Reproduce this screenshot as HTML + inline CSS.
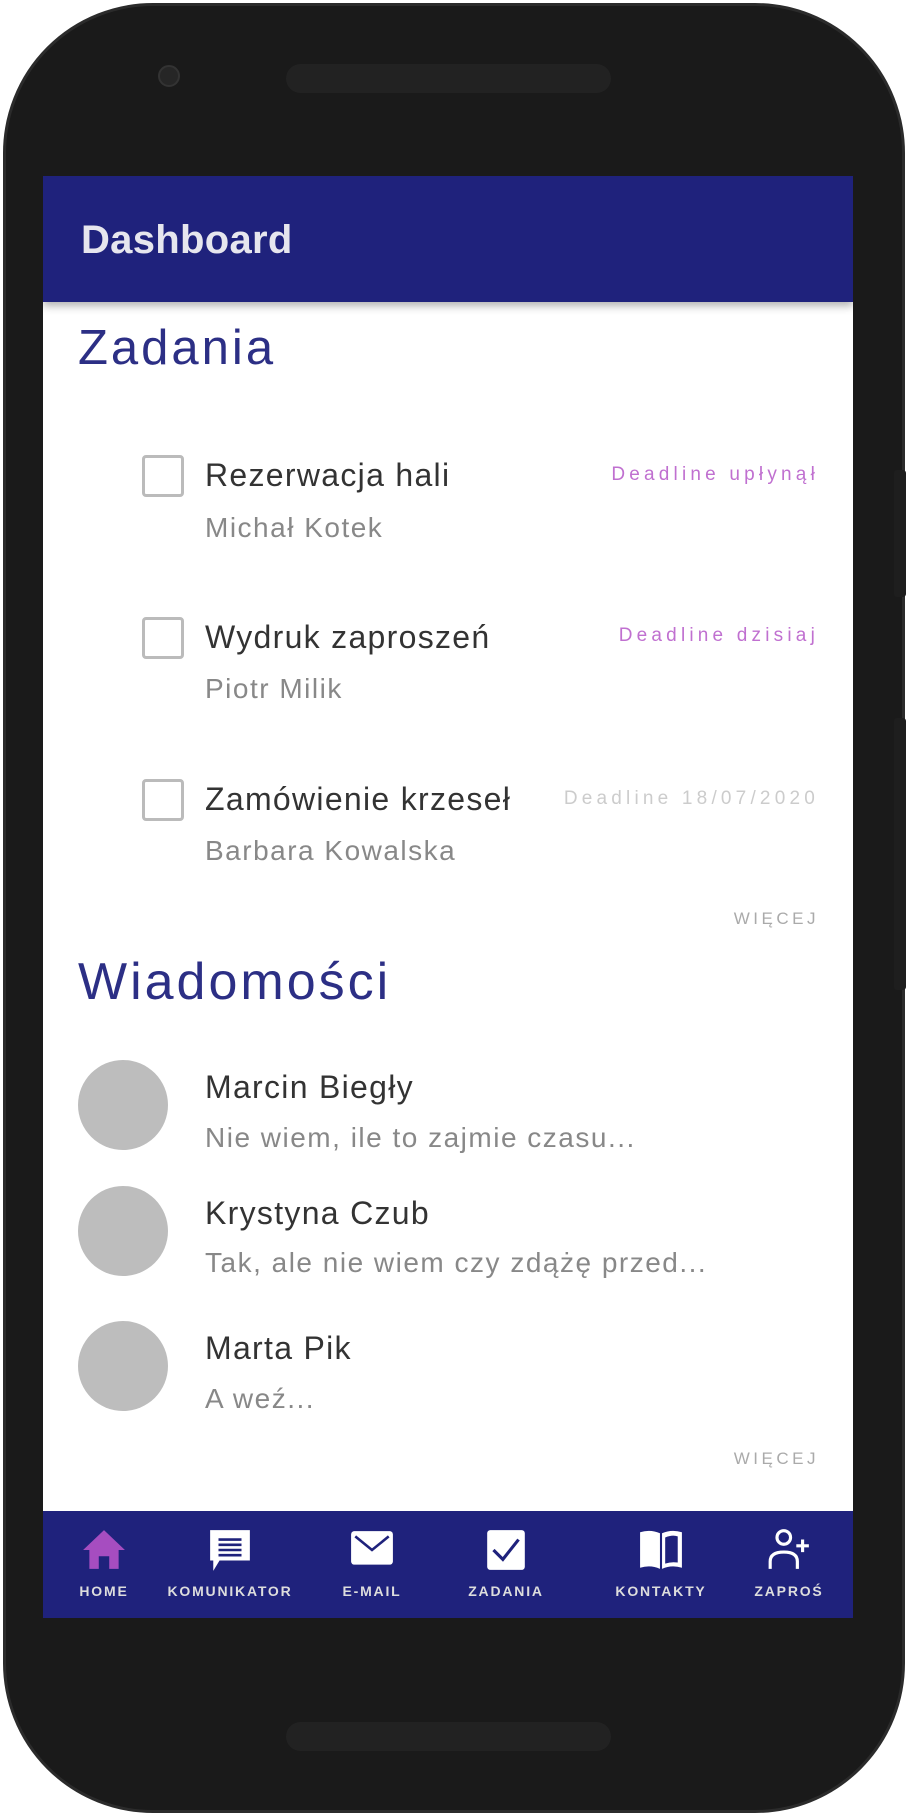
<!DOCTYPE html>
<html><head><meta charset="utf-8"><style>
*{margin:0;padding:0;box-sizing:border-box}
html,body{width:908px;height:1820px;background:#fff;overflow:hidden;font-family:"Liberation Sans",sans-serif}
.phone{position:absolute;left:3px;top:3px;width:902px;height:1810px;background:#1a1a1a;border-radius:150px;border:3px solid #2b2b2b}
.btn{position:absolute;left:894px;width:12px;background:#1e1e1e;border-radius:3px}
.spk{position:absolute;left:286px;width:325px;height:29px;border-radius:15px;background:#222}
.cam{position:absolute;left:158px;top:65px;width:22px;height:22px;border-radius:50%;background:#262626;border:2px solid #333}
.screen{position:absolute;left:43px;top:176px;width:810px;height:1442px;background:#fff;overflow:hidden}
.hdr{position:absolute;left:0;top:0;width:810px;height:126px;background:#1f227c;box-shadow:0 4px 8px rgba(0,0,0,.3)}
.hdr span{position:absolute;left:38px;top:42px;color:#e6e6ee;font-size:40px;font-weight:bold;letter-spacing:0.3px}
.h2{position:absolute;left:35px;color:#2c2f85;font-size:49px;letter-spacing:3px}
.cb{position:absolute;left:99px;width:42px;height:42px;border:3px solid #bbb;border-radius:4px}
.t{position:absolute;left:162px;color:#333;font-size:32px;letter-spacing:1.3px}
.s{position:absolute;left:162px;color:#888;font-size:28px;letter-spacing:1.5px}
.dl{position:absolute;right:34px;font-size:19px;letter-spacing:4.2px}
.more{position:absolute;right:34px;color:#aaa;font-size:17px;letter-spacing:3.5px}
.av{position:absolute;left:35px;width:90px;height:90px;border-radius:50%;background:#bdbdbd}
.nav{position:absolute;left:0;top:1335px;width:810px;height:107px;background:#1f227c}
.it{position:absolute;top:0;width:150px;margin-left:-75px;text-align:center;color:#fff;font-size:14px;font-weight:bold}
.it svg{position:absolute;left:52px;top:16px}
.it span{position:absolute;left:0;right:0;top:72px;color:#ddd;letter-spacing:1.8px}
</style></head><body>
<div class="phone"></div>
<div class="btn" style="top:470px;height:127px"></div>
<div class="btn" style="top:718px;height:272px"></div>
<div class="cam"></div>
<div class="spk" style="top:64px"></div>
<div class="spk" style="top:1722px"></div>
<div class="screen">
<div class="hdr"><span>Dashboard</span></div>
<div class="h2" style="top:144px">Zadania</div>
<div class="cb" style="top:279px"></div><div class="t" style="top:281px">Rezerwacja hali</div><div class="s" style="top:336px">Michał Kotek</div><div class="dl" style="top:288px;color:#c070d0">Deadline upłynął</div>
<div class="cb" style="top:441px"></div><div class="t" style="top:443px">Wydruk zaproszeń</div><div class="s" style="top:497px">Piotr Milik</div><div class="dl" style="top:449px;color:#c070d0">Deadline dzisiaj</div>
<div class="cb" style="top:603px"></div><div class="t" style="top:605px">Zamówienie krzeseł</div><div class="s" style="top:659px">Barbara Kowalska</div><div class="dl" style="top:612px;color:#ccc">Deadline 18/07/2020</div>
<div class="more" style="top:733px">WIĘCEJ</div>
<div class="h2" style="top:776px;font-size:52px">Wiadomości</div>
<div class="av" style="top:884px"></div><div class="t" style="top:893px">Marcin Biegły</div><div class="s" style="top:946px">Nie wiem, ile to zajmie czasu...</div>
<div class="av" style="top:1010px"></div><div class="t" style="top:1019px">Krystyna Czub</div><div class="s" style="top:1071px">Tak, ale nie wiem czy zdążę przed...</div>
<div class="av" style="top:1145px"></div><div class="t" style="top:1154px">Marta Pik</div><div class="s" style="top:1207px">A weź...</div>
<div class="more" style="top:1273px">WIĘCEJ</div>
<div class="nav">
<div class="it" style="left:61px"><svg width="46" height="46" viewBox="0 0 44 44"><path d="M22 3 L42 22 L36 22 L36 40 L27 40 L27 28 L17 28 L17 40 L8 40 L8 22 L2 22 Z" fill="#a64dc0"/></svg><span>HOME</span></div>
<div class="it" style="left:187px"><svg width="46" height="46" viewBox="0 0 44 44"><path d="M3 3 H41 V32 H12 L6 42 V32 H3 Z" fill="#fff"/><path d="M11 12H33M11 17H33M11 22H33M11 27H33" stroke="#1f227c" stroke-width="2.5"/></svg><span>KOMUNIKATOR</span></div>
<div class="it" style="left:329px"><svg width="46" height="46" viewBox="0 0 44 44"><rect x="2" y="4" width="40" height="32" rx="3" fill="#fff"/><path d="M6 9 L22 22 L38 9" fill="none" stroke="#1f227c" stroke-width="2.5"/></svg><span>E-MAIL</span></div>
<div class="it" style="left:463px"><svg width="46" height="46" viewBox="0 0 44 44"><rect x="4" y="3" width="36" height="38" rx="3" fill="#fff"/><path d="M10 22 L19 31 L34 12" fill="none" stroke="#1f227c" stroke-width="3"/></svg><span>ZADANIA</span></div>
<div class="it" style="left:618px"><svg width="46" height="46" viewBox="0 0 44 44"><path d="M2 5 Q12 2 21 6 V40 Q12 36 2 39 Z M23 6 Q32 2 42 5 V39 Q32 36 23 40 Z" fill="#fff"/><path d="M26 10 Q33 7 38 9 V34 Q32 33 26 35 Z" fill="#1f227c"/></svg><span>KONTAKTY</span></div>
<div class="it" style="left:746px"><svg width="46" height="46" viewBox="0 0 44 44"><circle cx="17" cy="10" r="6.5" fill="none" stroke="#fff" stroke-width="3"/><path d="M4 40 V33 Q4 24 17 24 Q30 24 30 33 V40" fill="none" stroke="#fff" stroke-width="3"/><path d="M35 12 V24 M29 18 H41" stroke="#fff" stroke-width="3"/></svg><span>ZAPROŚ</span></div>
</div>
</div>
</body></html>
